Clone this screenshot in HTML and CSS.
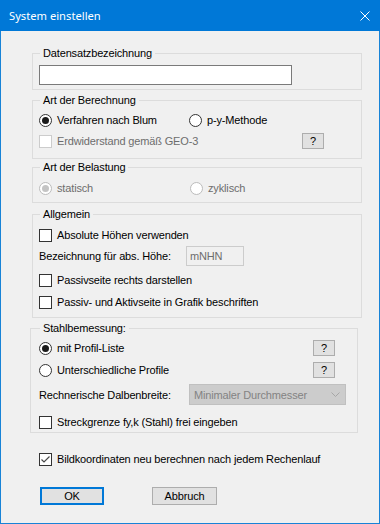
FILE: index.html
```html
<!DOCTYPE html>
<html lang="de">
<head>
    <meta charset="UTF-8">
    <title>System einstellen</title>
    <link rel="stylesheet" href="styles.css">
</head>
<body>
    <div class="dialog">
        <div class="titlebar">
            <span class="title">System einstellen</span>
            <svg class="close" width="10" height="10" viewBox="0 0 10 10">
                <path d="M0.5 0.5 L9.5 9.5 M9.5 0.5 L0.5 9.5" stroke="#fff" stroke-width="1" fill="none"/>
            </svg>
        </div>

        <div class="content">
            <fieldset class="group g1">
                <legend>Datensatzbezeichnung</legend>
                <div class="textbox name"></div>
            </fieldset>

            <fieldset class="group g2">
                <legend>Art der Berechnung</legend>
                <div class="row r22 first">
                    <label class="opt w150"><span class="radio on"></span>Verfahren nach Blum</label>
                    <label class="opt"><span class="radio"></span>p-y-Methode</label>
                </div>
                <div class="row r20">
                    <label class="opt disabled w263"><span class="box"></span>Erdwiderstand gemäß GEO-3</label>
                    <button class="btn help">?</button>
                </div>
            </fieldset>

            <fieldset class="group g3">
                <legend>Art der Belastung</legend>
                <div class="row r22">
                    <label class="opt disabled w151"><span class="radio on"></span>statisch</label>
                    <label class="opt disabled"><span class="radio"></span>zyklisch</label>
                </div>
            </fieldset>

            <fieldset class="group g4">
                <legend>Allgemein</legend>
                <div class="row r22">
                    <label class="opt"><span class="box"></span>Absolute Höhen verwenden</label>
                </div>
                <div class="row r20">
                    <span class="caption w147">Bezeichnung für abs. Höhe:</span>
                    <div class="textbox unit">mNHN</div>
                </div>
                <div class="row r22 gap3">
                    <label class="opt"><span class="box"></span>Passivseite rechts darstellen</label>
                </div>
                <div class="row r22">
                    <label class="opt"><span class="box"></span>Passiv- und Aktivseite in Grafik beschriften</label>
                </div>
            </fieldset>

            <fieldset class="group g5">
                <legend>Stahlbemessung:</legend>
                <div class="row r22 first">
                    <label class="opt w274"><span class="radio on"></span>mit Profil-Liste</label>
                    <button class="btn help">?</button>
                </div>
                <div class="row r22">
                    <label class="opt w274"><span class="radio"></span>Unterschiedliche Profile</label>
                    <button class="btn help">?</button>
                </div>
                <div class="row r25">
                    <span class="caption w150">Rechnerische Dalbenbreite:</span>
                    <div class="combo">
                        <span>Minimaler Durchmesser</span>
                        <svg width="9" height="5" viewBox="0 0 9 5">
                            <path d="M0.5 0.5 L4.5 4.5 L8.5 0.5" stroke="#a6a6a6" fill="none"/>
                        </svg>
                    </div>
                </div>
                <div class="row r20 last">
                    <label class="opt"><span class="box"></span>Streckgrenze fy,k (Stahl) frei eingeben</label>
                </div>
            </fieldset>

            <div class="row r22 redraw">
                <label class="opt">
                    <span class="box checked">
                        <svg width="11" height="11" viewBox="0 0 11 11">
                            <path d="M1.5 5.5 L4 8 L9.5 2.5" stroke="#4a4a4a" stroke-width="1.2" fill="none"/>
                        </svg>
                    </span>Bildkoordinaten neu berechnen nach jedem Rechenlauf
                </label>
            </div>

            <div class="actions">
                <button class="btn ok">OK</button>
                <button class="btn cancel">Abbruch</button>
            </div>
        </div>
    </div>
</body>
</html>
```

FILE: styles.css
```css
body {
    margin: 0;
    font-family: "Liberation Sans", Arial, sans-serif;
    font-size: 11px;
    letter-spacing: -0.15px;
    color: #000;
    background: #f0f0f0;
}

.dialog {
    width: 380px;
    height: 524px;
    box-sizing: border-box;
    border: 1px solid #1883d7;
    border-top: none;
    background: #f0f0f0;
}

.titlebar {
    height: 31px;
    margin: 0 -1px;
    background: #0078d7;
    display: flex;
    align-items: center;
    justify-content: space-between;
    padding: 0 10px 0 9px;
}

.titlebar .title {
    font-family: "Noto Sans", sans-serif;
    font-size: 11.2px;
    letter-spacing: 0;
    color: #fff;
}

.content {
    padding-top: 16px;
}

/* Gruppenrahmen */
.group {
    margin: 0 0 0 31px;
    width: 330px;
    box-sizing: border-box;
    border: 1px solid #dcdcdc;
    padding: 0 6px 4px 6px;
    min-inline-size: 0;
}

.group legend {
    margin-left: 1px;
    padding: 0 3px;
    line-height: 13px;
}

.g2 { margin-top: 4px; padding-bottom: 7px; }
.g3 { margin-top: 2px; padding-bottom: 3px; }
.g4 { margin-top: 5px; padding-bottom: 4px; }
.g5 {
    margin: 4px 0 0 29px;
    width: 328px;
    padding: 0 6px 0 8px;
}

.g3 .row, .g4 .row:first-of-type { margin-top: 3px; }

.row {
    display: flex;
    align-items: center;
}

.r20 { height: 20px; }
.r22 { height: 22px; }
.r25 { height: 25px; margin-top: 1px; }
.row.first { margin-top: 2px; }
.row.gap3 { margin-top: 3px; }
.row.last { margin-top: 5px; }

.opt {
    display: flex;
    align-items: center;
    gap: 5px;
    white-space: nowrap;
}

.w150 { width: 150px; }
.w151 { width: 151px; }
.w147 { width: 147px; }
.w263 { width: 263px; }
.w274 { width: 274px; }

.opt.disabled { color: #6d6d6d; }

.caption { white-space: nowrap; }

/* Checkbox und Radio */
.box {
    width: 13px;
    height: 13px;
    box-sizing: border-box;
    border: 1px solid #333;
    background: #fff;
    display: flex;
    align-items: center;
    justify-content: center;
    flex: none;
}

.disabled .box { border-color: #cccccc; }

.radio {
    width: 13px;
    height: 13px;
    box-sizing: border-box;
    border: 1px solid #333;
    border-radius: 50%;
    background: #fff;
    display: flex;
    align-items: center;
    justify-content: center;
    flex: none;
}

.radio.on::after {
    content: "";
    width: 7px;
    height: 7px;
    border-radius: 50%;
    background: #1a1a1a;
}

.disabled .radio { border-color: #bcbcbc; }
.disabled .radio.on::after { background: #c4c4c4; }

/* Eingabefelder */
.textbox {
    box-sizing: border-box;
    height: 20px;
    background: #fff;
    border: 1px solid #7a7a7a;
}

.textbox.name {
    width: 253px;
    margin-top: 5px;
}

.textbox.unit {
    width: 58px;
    background: #f0f0f0;
    border-color: #cccccc;
    color: #6d6d6d;
    padding: 3px 0 0 3px;
}

.combo {
    box-sizing: border-box;
    width: 157px;
    height: 21px;
    background: #cccccc;
    border: 1px solid #c0c0c0;
    color: #838383;
    display: flex;
    align-items: center;
    justify-content: space-between;
    padding: 0 5px 0 4px;
}

/* Schaltflaechen */
.btn {
    font-family: "Liberation Sans", Arial, sans-serif;
    font-size: 11px;
    letter-spacing: -0.15px;
    color: #000;
    background: #e1e1e1;
    border: 1px solid #adadad;
    padding: 0;
    box-sizing: border-box;
}

.btn.help {
    width: 22px;
    height: 16px;
    line-height: 14px;
}

.redraw {
    margin: 15px 0 0 38px;
}

.actions {
    display: flex;
    margin: 17px 0 0 39px;
}

.btn.ok {
    width: 64px;
    height: 18px;
    border: 2px solid #0078d7;
}

.btn.cancel {
    width: 65px;
    height: 18px;
    margin-left: 48px;
}
```
